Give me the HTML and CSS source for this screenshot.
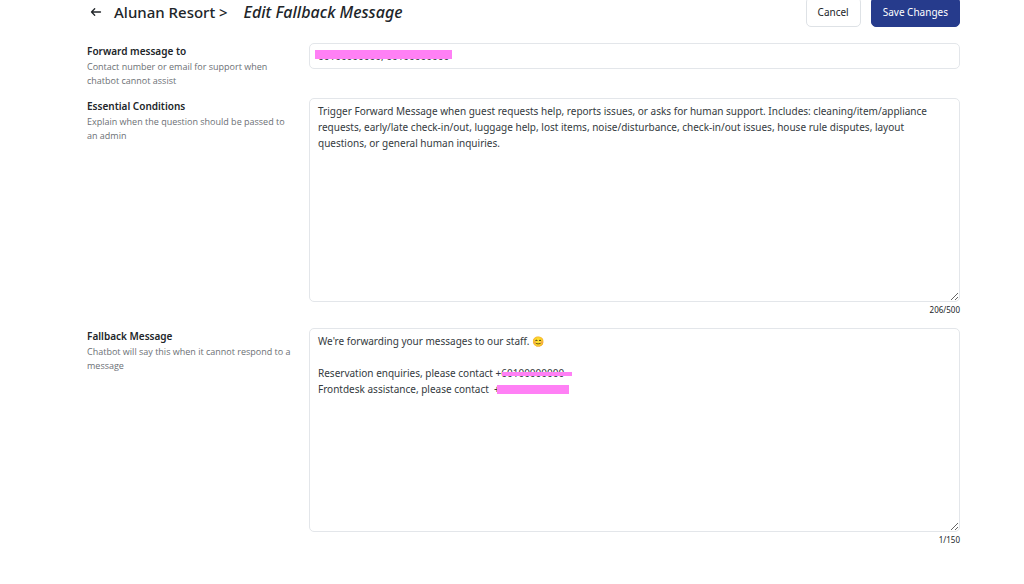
FILE: index.html
```html
<!DOCTYPE html>
<html lang="en">
<head>
    <meta charset="UTF-8">
    <title>Edit Fallback Message</title>
    <link rel="stylesheet" href="styles.css">
</head>
<body>
    <form class="page">
        <header class="header">
            <a href="#" class="back" aria-label="Back">
                <svg width="12" height="12" viewBox="0 0 12 12" fill="none" stroke="#212529" stroke-width="1.3" stroke-linecap="round" stroke-linejoin="round">
                    <path d="M10.5 6H1.5M4.7 2.8L1.5 6L4.7 9.2"/>
                </svg>
            </a>
            <h1>Alunan Resort &gt; <em>Edit Fallback Message</em></h1>
            <button type="button" class="btn">Cancel</button>
            <button type="submit" class="btn btn-primary">Save Changes</button>
        </header>

        <div class="row">
            <div class="info">
                <label for="forward">Forward message to</label>
                <p>Contact number or email for support when chatbot cannot assist</p>
            </div>
            <div class="field">
                <input type="text" id="forward" value="60100000000, 60100000000">
                <span class="mark mark-forward"></span>
            </div>
        </div>

        <div class="row">
            <div class="info">
                <label for="conditions">Essential Conditions</label>
                <p>Explain when the question should be passed to an admin</p>
            </div>
            <div class="field">
                <textarea id="conditions">Trigger Forward Message when guest requests help, reports issues, or asks for human support. Includes: cleaning/item/appliance requests, early/late check-in/out, luggage help, lost items, noise/disturbance, check-in/out issues, house rule disputes, layout questions, or general human inquiries.</textarea>
                <div class="count">206/500</div>
            </div>
        </div>

        <div class="row">
            <div class="info">
                <label for="fallback">Fallback Message</label>
                <p>Chatbot will say this when it cannot respond to a message</p>
            </div>
            <div class="field">
                <textarea id="fallback">We're forwarding your messages to our staff. 😊

Reservation enquiries, please contact +60100000000
Frontdesk assistance, please contact  +60100000000</textarea>
                <span class="mark mark-reservation"></span>
                <span class="mark mark-frontdesk"></span>
                <div class="count">1/150</div>
            </div>
        </div>
    </form>
</body>
</html>
```
FILE: styles.css
```css
* { box-sizing: border-box; }
body { margin: 0; font-family: "Noto Sans", "Open Sans", sans-serif; font-size: 10px; color: #212529; background: #fff; overflow: hidden; }
.page { padding: 0 64px 0 87px; }

/* the header is partly scrolled off the top */
.header { display: flex; align-items: center; margin-top: -3px; margin-bottom: 16px; }
.back { display: flex; margin: 0 12px 0 3px; }
h1 { flex: 1; margin: 0; font-size: 15px; line-height: 30px; font-weight: 500; }
h1 em { margin-left: 12px; font-size: 16px; }
.btn { height: 30px; margin-left: 10px; padding: 0 11px; border: 1px solid #dee2e6; border-radius: 5px; background: #fff; color: #212529; font: inherit; }
.btn-primary { border-color: #263b8c; background: #263b8c; color: #fff; }

.row { display: grid; grid-template-columns: 206px 1fr; column-gap: 16px; margin-bottom: 10px; }
.info label { display: block; line-height: 16px; font-weight: 600; }
.info p { margin: 0; padding-top: 1px; font-family: "Open Sans", sans-serif; font-size: 9px; line-height: 14px; color: #6c7075; }

.field { position: relative; }
.field input, .field textarea { display: block; width: 100%; padding: 4px 8px; border: 1px solid #e3e6ea; border-radius: 5px; background: #fff; color: #343a40; font: inherit; line-height: 16px; }
.field input { height: 26px; }
.field textarea { height: 204px; resize: vertical; }
.count { font-size: 8px; line-height: 16px; text-align: right; }

/* cover the phone numbers */
.mark { position: absolute; background: #ff80f5; }
.mark-forward { left: 6px; top: 7px; width: 137px; height: 9px; }
.mark-reservation { left: 193px; top: 44px; width: 70px; height: 4px; }
.mark-frontdesk { left: 188px; top: 57px; width: 72px; height: 9px; }
```
